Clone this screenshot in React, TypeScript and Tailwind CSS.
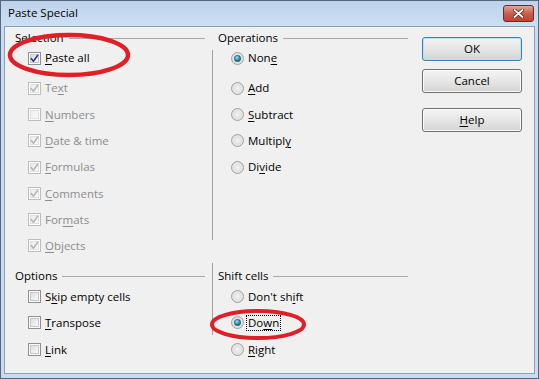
import React from 'react';

/** Mnemonic label: underlines the character at index `u`. */
const Label: React.FC<{ text: string; u?: number; className?: string }> = ({ text, u, className = '' }) => {
  if (u === undefined) return <span className={className}>{text}</span>;
  return (
    <span className={className}>
      {text.slice(0, u)}
      <span className="underline underline-offset-2">{text[u]}</span>
      {text.slice(u + 1)}
    </span>
  );
};

const CheckBox: React.FC<{ checked?: boolean; disabled?: boolean }> = ({ checked, disabled }) => (
  <svg width="13" height="13" viewBox="0 0 13 13" className="flex-shrink-0" aria-hidden>
    <defs>
      <linearGradient id="cb-in" x1="0" y1="0" x2="1" y2="1">
        <stop offset="0%" stopColor="#dcdcdc" />
        <stop offset="100%" stopColor="#fbfbfb" />
      </linearGradient>
      <linearGradient id="cb-in-dis" x1="0" y1="0" x2="1" y2="1">
        <stop offset="0%" stopColor="#ececec" />
        <stop offset="100%" stopColor="#fafafa" />
      </linearGradient>
    </defs>
    <rect x="0.5" y="0.5" width="12" height="12" fill="#fdfdfd" stroke={disabled ? '#bdbdbd' : '#8e8f8f'} />
    <rect
      x="2.5"
      y="2.5"
      width="8"
      height="8"
      fill={disabled ? 'url(#cb-in-dis)' : 'url(#cb-in)'}
      stroke={disabled ? '#e0e0e0' : '#c6c6c6'}
    />
    {checked && (
      <path
        d="M3.2 6.6l2.2 2.6 4.3-6"
        fill="none"
        stroke={disabled ? '#b4b4b4' : '#27358a'}
        strokeWidth={1.5}
        strokeLinecap="round"
        strokeLinejoin="round"
      />
    )}
  </svg>
);

const Radio: React.FC<{ checked?: boolean }> = ({ checked }) => (
  <svg width="13" height="13" viewBox="0 0 13 13" className="flex-shrink-0" aria-hidden>
    <defs>
      <radialGradient id="rd-fill" cx="0.5" cy="0.5" r="0.6">
        <stop offset="0%" stopColor="#f4f4f4" />
        <stop offset="100%" stopColor="#cfcfcf" />
      </radialGradient>
      <radialGradient id="rd-dot" cx="0.4" cy="0.35" r="0.7">
        <stop offset="0%" stopColor="#9fe0ee" />
        <stop offset="60%" stopColor="#2a8ea6" />
        <stop offset="100%" stopColor="#15566b" />
      </radialGradient>
    </defs>
    <circle cx="6.5" cy="6.5" r="6" fill="url(#rd-fill)" stroke="#a2a2a2" />
    <circle cx="6.5" cy="6.5" r="4.5" fill="none" stroke="#ececec" strokeWidth={0.8} />
    {checked && <circle cx="6.5" cy="6.5" r="3.2" fill="url(#rd-dot)" stroke="#1e5b6e" strokeWidth={0.6} />}
  </svg>
);

const GroupHeader: React.FC<{ title: string }> = ({ title }) => (
  <div className="h-[14px] flex items-center">
    <span>{title}</span>
    <div className="flex-1 h-px bg-[#a8a8a8] ml-[5px]" />
  </div>
);

type Item = { text: string; u?: number; checked?: boolean; disabled?: boolean; focus?: boolean };

const CheckRow: React.FC<Item & { h: string }> = ({ text, u, checked, disabled, h }) => (
  <div className={`${h} flex items-center pl-[13px] gap-[4px]`}>
    <CheckBox checked={checked} disabled={disabled} />
    <Label text={text} u={u} className={disabled ? 'text-[#8d8d8d]' : ''} />
  </div>
);

const RadioRow: React.FC<Item & { h: string }> = ({ text, u, checked, focus, h }) => (
  <div className={`${h} flex items-center pl-[13px] gap-[4px]`}>
    <Radio checked={checked} />
    <Label
      text={text}
      u={u}
      className={focus ? 'outline outline-1 outline-dotted outline-black leading-[14px] px-[1px] -ml-[1px]' : ''}
    />
  </div>
);

const selection: Item[] = [
  { text: 'Text', u: 2, checked: true, disabled: true },
  { text: 'Numbers', u: 0, disabled: true },
  { text: 'Date & time', u: 0, checked: true, disabled: true },
  { text: 'Formulas', u: 0, checked: true, disabled: true },
  { text: 'Comments', u: 0, checked: true, disabled: true },
  { text: 'Formats', u: 3, checked: true, disabled: true },
  { text: 'Objects', u: 0, checked: true, disabled: true },
];

const operations: Item[] = [
  { text: 'Add', u: 0 },
  { text: 'Subtract', u: 0 },
  { text: 'Multiply', u: 7 },
  { text: 'Divide', u: 2 },
];

const options: Item[] = [
  { text: 'Skip empty cells', u: 1 },
  { text: 'Transpose', u: 0 },
  { text: 'Link', u: 0 },
];

const shiftCells: Item[] = [
  { text: "Don't shift", u: 8 },
  { text: 'Down', u: 2, checked: true, focus: true },
  { text: 'Right', u: 0 },
];

const DialogButton: React.FC<{ text: string; u?: number; isDefault?: boolean; className?: string }> = ({
  text,
  u,
  isDefault,
  className = '',
}) => (
  <button
    type="button"
    className={`w-[100px] h-[24px] rounded-[3px] border flex items-center justify-center bg-gradient-to-b from-[#f4f4f4] via-[#e6e6e6] to-[#d4d4d4] ${
      isDefault ? 'border-[#3c7fb1] shadow-[inset_0_0_0_1px_#b8e2f5]' : 'border-[#707070] shadow-[inset_0_0_0_1px_#fbfbfb]'
    } ${className}`}
  >
    <Label text={text} u={u} />
  </button>
);

export default function App() {
  return (
    <div className="relative w-[539px] h-[379px] bg-[#c9dcf1] border border-[#56677c] flex flex-col font-['Open_Sans',sans-serif] text-[11.5px] text-black leading-none select-none">
      {/* title bar */}
      <div className="h-[25px] flex items-start justify-between pl-[7px] pr-[4px] bg-gradient-to-b from-[#bed3eb] to-[#ccdff3]">
        <span className="mt-[6px]">Paste Special</span>
        <div className="mt-[4px] w-[31px] h-[17px] rounded-[3px] border border-[#6d2a2a] bg-gradient-to-b from-[#e4a595] via-[#c85f4f] to-[#c4402e] flex items-center justify-center">
          <svg width="11" height="9" viewBox="0 0 11 9" aria-hidden>
            <path d="M1.5 1l8 7M9.5 1l-8 7" stroke="#4a1a12" strokeWidth={3.2} strokeLinecap="round" />
            <path d="M1.5 1l8 7M9.5 1l-8 7" stroke="#ffffff" strokeWidth={1.8} strokeLinecap="round" />
          </svg>
        </div>
      </div>

      {/* client area */}
      <div className="flex-1 mx-[3px] mb-[4px] bg-[#f0f0f0] border border-[#8aa1bb] flex">
        <div className="w-[403px] pl-[10px] pt-[4px] flex flex-col">
          {/* top groups */}
          <div className="flex">
            <div className="w-[190px] flex flex-col">
              <GroupHeader title="Selection" />
              <CheckRow h="h-[26px]" text="Paste all" u={0} checked />
              <div className="mt-[4px] flex flex-col">
                {selection.map((it) => (
                  <CheckRow key={it.text} h="h-[26.3px]" {...it} />
                ))}
              </div>
            </div>
            <div className="ml-[7px] mt-[19px] w-px h-[190px] bg-[#a0a0a0]" />
            <div className="ml-[5px] w-[190px] flex flex-col">
              <GroupHeader title="Operations" />
              <RadioRow h="h-[26px]" text="None" u={3} checked />
              <div className="mt-[4px] flex flex-col">
                {operations.map((it) => (
                  <RadioRow key={it.text} h="h-[26.3px]" {...it} />
                ))}
              </div>
            </div>
          </div>

          {/* bottom groups */}
          <div className="flex mt-[10px]">
            <div className="w-[190px] flex flex-col">
              <GroupHeader title="Options" />
              {options.map((it) => (
                <CheckRow key={it.text} h="h-[26.5px]" {...it} />
              ))}
            </div>
            <div className="ml-[7px] -mt-[6px] w-px h-[72px] bg-[#a0a0a0]" />
            <div className="ml-[5px] w-[190px] flex flex-col">
              <GroupHeader title="Shift cells" />
              {shiftCells.map((it) => (
                <RadioRow key={it.text} h="h-[26.5px]" {...it} />
              ))}
            </div>
          </div>
        </div>

        {/* buttons */}
        <div className="ml-[14px] pt-[10px] flex flex-col">
          <DialogButton text="OK" isDefault />
          <DialogButton text="Cancel" className="mt-[8px] h-[23px]" />
          <DialogButton text="Help" u={0} className="mt-[15px]" />
        </div>
      </div>

      {/* red annotation circles */}
      <svg className="absolute left-0 top-0 pointer-events-none" width="539" height="379" aria-hidden>
        <ellipse cx="68" cy="54" rx="59" ry="20" fill="none" stroke="#e01f26" strokeWidth={4.5} />
        <ellipse cx="257" cy="323.5" rx="46" ry="13.5" fill="none" stroke="#e01f26" strokeWidth={4} />
      </svg>
    </div>
  );
}
